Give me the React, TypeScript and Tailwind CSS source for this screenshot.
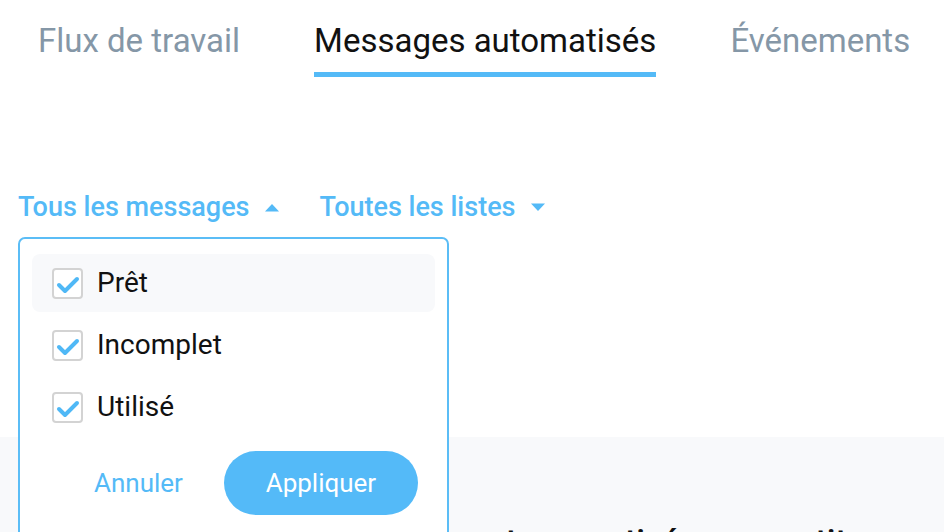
import React from 'react';

const tabs = [
  { label: 'Flux de travail', active: false },
  { label: 'Messages automatisés', active: true },
  { label: 'Événements', active: false },
];

const statuses = [
  { label: 'Prêt', hover: true },
  { label: 'Incomplet', hover: false },
  { label: 'Utilisé', hover: false },
];

function Caret({ up }: { up?: boolean }) {
  return (
    <svg width="16" height="9" viewBox="0 0 16 9" className="shrink-0">
      <path d={up ? 'M1 8.5 L8 1 L15 8.5 Z' : 'M1 0.5 L8 8 L15 0.5 Z'} fill="#54baf7" />
    </svg>
  );
}

function CheckBox() {
  return (
    <div className="w-[31px] h-[31px] rounded-[4px] border-2 border-[#d3d3d3] bg-white shrink-0">
      <svg width="27" height="27" viewBox="0 0 27 27">
        <polyline
          points="5,15 11,21 23,9"
          fill="none"
          stroke="#4fb8f6"
          strokeWidth="4"
          strokeLinecap="round"
          strokeLinejoin="round"
        />
      </svg>
    </div>
  );
}

export default function App() {
  return (
    <div className="relative w-[944px] h-[532px] overflow-hidden bg-white font-['Roboto',sans-serif]">
      <div className="h-[437px]">
        {/* tabs */}
        <div className="flex gap-[74px] pl-[38px] pt-[22px]">
          {tabs.map((t) => (
            <div key={t.label} className="flex flex-col">
              <span
                className={`text-[33px] leading-[38px] ${t.active ? 'text-[#111111]' : 'text-[#8597a7]'}`}
              >
                {t.label}
              </span>
              <div className={`mt-[12px] h-[5px] ${t.active ? 'bg-[#54baf7]' : 'bg-transparent'}`} />
            </div>
          ))}
        </div>

        {/* filters */}
        <div className="flex items-center pl-[18px] mt-[114px] text-[27px] leading-[32px] font-medium text-[#54baf7]">
          <span>Tous les messages</span>
          <span className="ml-[14px]">
            <Caret up />
          </span>
          <span className="ml-[40px]">Toutes les listes</span>
          <span className="ml-[14px]">
            <Caret />
          </span>
        </div>
      </div>

      <div className="h-[95px] bg-[#f8f9fb] flex justify-start pt-[84px] pl-[274px]">
        <span className="text-[34px] leading-[40px] font-medium text-[#111111] whitespace-nowrap">
          Ce message est pas activé en ce petit
        </span>
      </div>

      {/* dropdown */}
      <div className="absolute left-[18px] top-[237px] w-[431px] h-[320px] rounded-[7px] border-2 border-[#5bbdf6] bg-white px-[12px] pt-[15px]">
        <div className="flex flex-col gap-[4px]">
          {statuses.map((s) => (
            <div
              key={s.label}
              className={`flex items-center h-[58px] pl-[20px] gap-[14px] rounded-[8px] ${s.hover ? 'bg-[#f8f9fb]' : ''}`}
            >
              <CheckBox />
              <span className="text-[28px] leading-[32px] text-[#111111]">{s.label}</span>
            </div>
          ))}
        </div>
        <div className="flex items-center mt-[15px] pl-[62px]">
          <button className="text-[26px] leading-[32px] text-[#54baf7]">Annuler</button>
          <button className="ml-[41px] w-[194px] h-[64px] rounded-full bg-[#54baf8] text-white text-[26px] leading-[32px]">
            Appliquer
          </button>
        </div>
      </div>
    </div>
  );
}
